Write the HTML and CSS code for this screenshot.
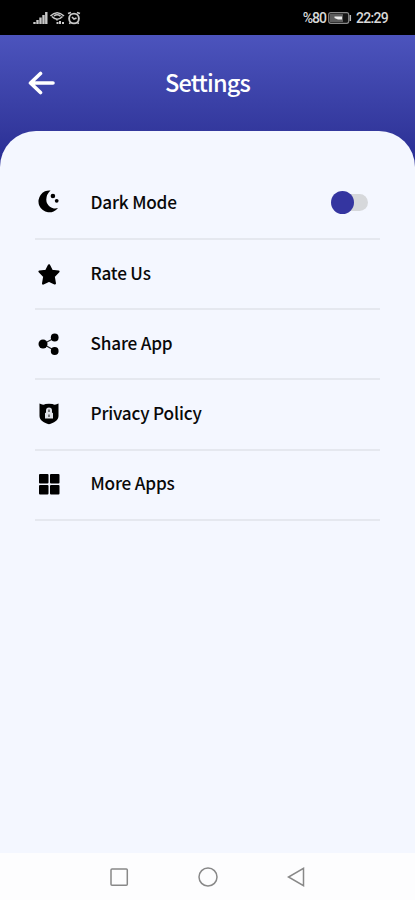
FILE: index.html
```html
<!DOCTYPE html>
<html lang="en">
<head>
<meta charset="utf-8">
<title>Settings</title>
<link rel="stylesheet" href="styles.css">
</head>
<body>
<div class="status">
  <svg class="signals" width="50" height="16" viewBox="0 0 50 16" fill="none" stroke="#c8c8c8">
    <path d="M1.500 14v-2M4.500 14v-4M7.500 14v-6.500M10.500 14v-9M13.300 14v-12" stroke-width="2.400"/>
    <path d="M17.500 6Q24 -.5 31 6M19 6.500Q24 12 29.500 6.500M21 6Q24 3.500 27.500 6M24 9.500v1" stroke-width="1.600"/>
    <path d="M23.500 13h2M27 11v3M30 12v2" stroke-width="2"/>
    <circle cx="41" cy="8.500" r="4.900" stroke-width="1.900"/>
    <path d="M35 3.500l3-1M47 3.500l-3-1M37.500 12l-1 2M44.500 12l1 2M39 7l2 2 2.500-1" stroke-width="1.600"/>
  </svg>
  <div class="status-right">
    <span class="percent">%80</span>
    <svg width="24" height="12" viewBox="0 0 24 12">
      <rect x=".7" y=".7" width="20" height="10.600" rx="2" fill="#151515" stroke="#888" stroke-width="1.200"/>
      <path d="M2 2h13v8H2z" fill="#5c5c5c"/>
      <path d="M6.500 4.500h7.500v3h-4l-3.500-1.500z" fill="#eee"/>
      <path d="M22.300 3v6" stroke="#bbb" stroke-width="1.500"/>
    </svg>
    <span class="clock">22:29</span>
  </div>
</div>
<header class="header">
  <svg class="back" width="28" height="24" viewBox="0 0 28 24" fill="none" stroke="#fff" stroke-width="3.600" stroke-linecap="round" stroke-linejoin="round">
    <path d="M12.500 2.500L2.500 12l10 9.500M3 12H25"/>
  </svg>
  <h1>Settings</h1>
</header>
<main class="sheet">
  <div class="row first">
    <svg class="icon" viewBox="0 0 24 24"><path d="M13.500 .5A10.900 10.900 0 1 0 21 18A8.800 8.800 0 0 1 9.300 9.500Q9.500 4 13.500 .5z"/><circle cx="15.900" cy="6" r="2.300"/><circle cx="19.700" cy="10.800" r="1.900"/></svg>
    <span class="label">Dark Mode</span>
    <span class="switch"></span>
  </div>
  <div class="row">
    <svg class="icon" viewBox="0 0 24 24"><path d="M12 3.300l2.800 5.500 6.700.8-4.800 4.900 1.200 7L12 18.700l-5.900 2.800 1.200-7L2.500 9.600l6.700-.8z" stroke="#000" stroke-width="2.200" stroke-linejoin="round"/></svg>
    <span class="label">Rate Us</span>
  </div>
  <div class="row">
    <svg class="icon" viewBox="0 0 24 24"><path d="M18.500 5.500L6 12l12.500 7" fill="none" stroke="#222" stroke-width="1.200"/><circle cx="6" cy="12" r="4.500"/><circle cx="17.700" cy="5.500" r="3.900"/><circle cx="17.700" cy="19" r="3.900"/></svg>
    <span class="label">Share App</span>
  </div>
  <div class="row">
    <svg class="icon" viewBox="0 0 24 24"><path d="M2.500 1.500Q6 3.500 8.500 2L12 1.700l3.500.3Q18 3.500 21.500 1.500V14c0 4.500-4.800 7-9.500 8.300C7.300 21 2.500 18.500 2.500 14z"/><path d="M8 11.200V16.500h8v-5.300l-1-.7V8.500a3 3 0 0 0-6 0v2z" fill="#dfe1e8"/><path d="M12 7.500v2.500M12 12.500v2.500" stroke="#333" stroke-width="1.200"/></svg>
    <span class="label">Privacy Policy</span>
  </div>
  <div class="row last">
    <svg class="icon" viewBox="0 0 24 24"><rect x="2" y="2" width="9.500" height="9.500" rx="1"/><rect x="13" y="2" width="9.500" height="9.500" rx="1"/><rect x="2" y="13" width="9.500" height="9.500" rx="1"/><rect x="13" y="13" width="9.500" height="9.500" rx="1"/></svg>
    <span class="label">More Apps</span>
  </div>
</main>
<nav class="navbar">
  <svg width="22" height="22" viewBox="0 0 22 22"><rect x="3" y="3" width="16.300" height="16.300" rx="1"/></svg>
  <svg width="22" height="22" viewBox="0 0 22 22"><circle cx="11" cy="11" r="9"/></svg>
  <svg width="22" height="22" viewBox="0 0 22 22"><path d="M18.500 2.300v17.400L3.500 11z"/></svg>
</nav>
</body>
</html>
```
FILE: styles.css
```css
* { box-sizing: border-box; }
body {
  margin: 0;
  height: 900px;
  display: flex;
  flex-direction: column;
  overflow: hidden;
  background: linear-gradient(#4c54bd 35px, #33389d 131px, #272c94 165px);
  font-family: "Noto Sans CJK SC", "Open Sans", sans-serif;
  color: #090909;
}
.status {
  height: 35px;
  flex: none;
  background: #000;
  display: flex;
  justify-content: space-between;
  align-items: center;
  padding: 1px 27px 0 33px;
}
.status-right {
  display: flex;
  align-items: center;
  gap: 2px;
  color: #d8d8d8;
  font: 500 14px/16px Roboto, sans-serif;
}
.clock { margin-left: 2px; letter-spacing: -0.700px; }
.percent { letter-spacing: -1px; }
.header {
  height: 96px;
  flex: none;
  display: grid;
  grid-template-columns: 56px 1fr 56px;
  align-items: center;
}
.back { margin-left: 28px; }
h1 {
  margin: -3px 0 0;
  color: #fff;
  font-size: 23.500px;
  line-height: 36px;
  font-weight: 500;
  letter-spacing: -0.850px;
  text-align: center;
}
.sheet {
  flex: 1;
  background: #f4f7ff;
  border-radius: 36px 36px 0 0;
  padding: 35px 35px 0;
}
.row {
  height: 70.200px;
  display: flex;
  align-items: center;
  border-bottom: 2px solid #e5e8ef;
  padding: 0 12px 0 2px;
}
.first { height: 74px; }
.last { padding-bottom: 2px; }
.icon { width: 24px; height: 24px; flex: none; }
.label {
  margin: -2px 0 0 29.500px;
  flex: 1;
  font-size: 17.200px;
  line-height: 26px;
  font-weight: 500;
  letter-spacing: -0.200px;
}
.first .label { margin-top: -1px; }
.switch {
  position: relative;
  width: 37px;
  height: 17px;
  background: linear-gradient(#d6d8db, #d6d8db) right / 30px 17px no-repeat;
  border-radius: 9px;
}
.switch::before {
  content: "";
  position: absolute;
  left: 0;
  top: -3px;
  width: 23px;
  height: 23px;
  border-radius: 50%;
  background: #3435a0;
}
.navbar {
  height: 47px;
  flex: none;
  background: #fdfdfe;
  display: flex;
  justify-content: center;
  align-items: center;
  gap: 66.500px;
}
.navbar svg { fill: none; stroke: #888; stroke-width: 1.500; }
```
